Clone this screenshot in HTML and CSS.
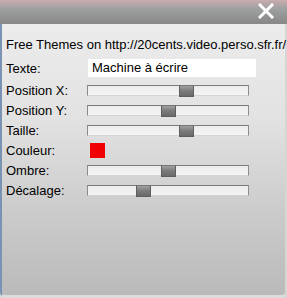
FILE: index.html
```html
<!DOCTYPE html>
<html>
<head>
<meta charset="utf-8">
<link rel="stylesheet" href="styles.css">
</head>
<body>
<div class="window">
  <div class="titlebar">
    <svg class="close" width="16" height="16" viewBox="0 0 16 16"><path d="M2 2 L14 14 M14 2 L2 14" stroke="#fff" stroke-width="3" stroke-linecap="square"/></svg>
  </div>
  <div class="content">
    <div class="credit">Free Themes on http://20cents.video.perso.sfr.fr/</div>
    <div class="form">
      <label class="lbl lbl-top">Texte:</label>
      <div class="ctl ctl-top"><div class="input">Machine à écrire</div></div>
      <label class="lbl">Position X:</label>
      <div class="ctl"><div class="track"><div class="thumb" style="left:91px"></div></div></div>
      <label class="lbl">Position Y:</label>
      <div class="ctl"><div class="track"><div class="thumb" style="left:73px"></div></div></div>
      <label class="lbl">Taille:</label>
      <div class="ctl"><div class="track"><div class="thumb" style="left:91px"></div></div></div>
      <label class="lbl">Couleur:</label>
      <div class="ctl"><div class="swatch"></div></div>
      <label class="lbl">Ombre:</label>
      <div class="ctl"><div class="track"><div class="thumb" style="left:73px"></div></div></div>
      <label class="lbl">Décalage:</label>
      <div class="ctl"><div class="track"><div class="thumb" style="left:48px"></div></div></div>
    </div>
  </div>
</div>
</body>
</html>
```
FILE: styles.css
```css
html, body {
  margin: 0;
  padding: 0;
  background: #d8d8d8;
}
body {
  width: 287px;
  height: 298px;
  overflow: hidden;
  font-family: "Liberation Sans", Arial, sans-serif;
  font-size: 13px;
  color: #000;
}
.window {
  width: 287px;
  height: 298px;
  display: flex;
  flex-direction: column;
}
.titlebar {
  height: 24px;
  flex: none;
  background: linear-gradient(#caacaf 0px, #b4a6a8 4px, #9c9f9f 10px, #8d8d8d 20px, #888 24px);
  display: flex;
  justify-content: flex-end;
  align-items: flex-start;
  padding-right: 13px;
  box-sizing: border-box;
}
.close {
  margin-top: 3px;
}
.content {
  flex: 1;
  background: linear-gradient(#ececec 0%, #e2e2e2 35%, #cbcbcb 70%, #bababa 100%);
  border-left: 2px solid #7a93b3;
  border-right: 2px solid #d6d6d6;
  border-bottom: 3px solid #dcdcdc;
  border-bottom-left-radius: 6px;
  border-bottom-right-radius: 6px;
  padding: 13px 0 0 4px;
}
.credit {
  white-space: nowrap;
  line-height: 16px;
  height: 16px;
}
.form {
  margin-top: 6px;
  display: grid;
  grid-template-columns: 81px 1fr;
  grid-auto-rows: 20px;
  grid-template-rows: 21px;
  align-items: center;
}
.lbl {
  line-height: 15px;
  white-space: nowrap;
}
.lbl-top {
  padding-bottom: 2px;
}
.ctl {
  position: relative;
  height: 100%;
  display: flex;
  align-items: center;
}
.ctl-top {
  align-items: flex-start;
}
.input {
  height: 18px;
  margin-left: 1px;
  background: #fff;
  line-height: 18px;
  padding-left: 4px;
  box-sizing: border-box;
  width: 168px;
}
.track {
  position: relative;
  width: 162px;
  height: 11px;
  box-sizing: border-box;
  background: linear-gradient(#ececec, #f4f4f4);
  border: 1px solid;
  border-color: #7c7c7c #8c8c8c #d4d4d4 #8a8a8a;
}
.thumb {
  position: absolute;
  top: -1px;
  width: 15px;
  height: 12px;
  box-sizing: border-box;
  background: linear-gradient(#a0a0a0, #7a7a7a 50%, #6a6a6a);
  border: 1px solid #5e5e5e;
  border-top-color: #777;
}
.swatch {
  width: 15px;
  height: 15px;
  margin-left: 3px;
  background: #f00000;
}
```
